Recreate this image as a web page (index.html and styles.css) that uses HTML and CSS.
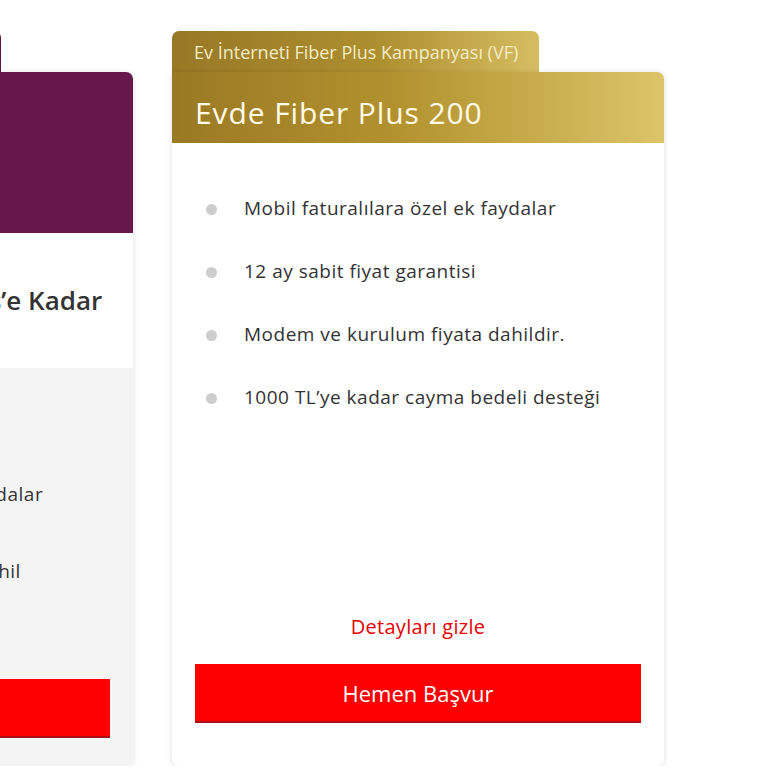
FILE: index.html
```html
<!DOCTYPE html>
<html lang="tr">
<head>
    <meta charset="UTF-8">
    <title>Ev İnterneti Kampanyaları</title>
    <link rel="stylesheet" href="styles.css">
</head>
<body>

<div class="offers">
    <!-- soldaki kart, ekrandan taşıyor -->
    <div class="offer">
        <div class="offer-tab offer-tab-purple"></div>
        <div class="offer-box">
            <div class="offer-head offer-head-purple"></div>
            <div class="offer-title">Fiber İnternette 100 Mbps’e Kadar</div>
            <div class="offer-body offer-body-grey">
                <ul class="features features-plain">
                    <li>Mobil faturalılara özel ek faydalar</li>
                    <li>Modem ve kurulum fiyata dahil</li>
                </ul>
                <a href="javascript:void(0);" class="apply">Hemen Başvur</a>
            </div>
        </div>
    </div>

    <div class="offer">
        <div class="offer-tab">Ev İnterneti Fiber Plus Kampanyası (VF)</div>
        <div class="offer-box">
            <div class="offer-head">
                <h2>Evde Fiber Plus 200</h2>
            </div>
            <div class="offer-body">
                <ul class="features">
                    <li>Mobil faturalılara özel ek faydalar</li>
                    <li>12 ay sabit fiyat garantisi</li>
                    <li>Modem ve kurulum fiyata dahildir.</li>
                    <li>1000 TL’ye kadar cayma bedeli desteği</li>
                </ul>
                <a href="javascript:void(0);" class="toggle">Detayları gizle</a>
                <a href="javascript:void(0);" class="apply">Hemen Başvur</a>
            </div>
        </div>
    </div>
</div>

</body>
</html>
```

FILE: styles.css
```css
body,h1,h2,h3,p,ul,li{margin:0;padding:0}
body{font:19px/1.4 "Open Sans", Lato, sans-serif;color:#333;background:#fff;overflow:hidden}
ul{list-style:none}
a{text-decoration:none}

.offers{
    display:flex;
    align-items:flex-start;
    gap:39px;
    margin-left:-359px;
    padding-top:31px;
}
.offer{
    width:492px;
    flex:none;
    display:flex;
    flex-direction:column;
}
.offer-tab{
    align-self:flex-start;
    height:41px;
    line-height:42px;
    padding:0 21px 0 22px;
    border-radius:7px 7px 0 0;
    background:linear-gradient(90deg,#987826 0%,#ad8e2f 55%,#d6bd62 100%);
    color:#f6edc4;
    font-size:18px;
    white-space:nowrap;
}
.offer-tab-purple{
    width:360px;
    padding:0;
    background:#5e1447;
}
.offer-box{
    height:694px;
    display:flex;
    flex-direction:column;
    background:#fff;
    border-radius:0 7px 7px 7px;
    box-shadow:0 1px 6px rgba(0,0,0,0.13);
    overflow:hidden;
}
.offer-head{
    height:71px;
    flex:none;
    display:flex;
    align-items:center;
    padding:11px 23px 0;
    box-sizing:border-box;
    background:linear-gradient(90deg,#9a7925 0%,#b2922f 45%,#dcc468 100%);
}
.offer-head h2{
    font-weight:400;
    font-size:30px;
    letter-spacing:0.9px;
    color:#fffbe6;
    white-space:nowrap;
}
.offer-head-purple{
    height:161px;
    background:#66174c;
}
.offer-title{
    height:135px;
    flex:none;
    display:flex;
    align-items:center;
    padding:0 0 0 35px;
    font-size:26px;
    font-weight:600;
    color:#333;
    white-space:nowrap;
}
.offer-body{
    flex:1;
    display:flex;
    flex-direction:column;
    padding:0 23px 43px;
}
.offer-body-grey{
    background:#f4f4f4;
    padding-bottom:28px;
}
.features{
    flex:1;
    padding:52px 0 0 49px;
    letter-spacing:0.5px;
}
.features li{
    position:relative;
    height:63px;
    white-space:nowrap;
}
.features li:before{
    content:"";
    position:absolute;
    left:-38px;
    top:9px;
    width:11px;
    height:11px;
    border-radius:50%;
    background:#cdcdcd;
}
.features-plain{
    padding:113px 0 0 67px;
}
.features-plain li{
    height:77px;
}
.features-plain li:before{
    display:none;
}
.toggle{
    text-align:center;
    color:#e60000;
    font-size:20px;
    letter-spacing:0.3px;
    margin-bottom:23px;
}
.apply{
    display:block;
    height:59px;
    line-height:58px;
    box-sizing:border-box;
    border-bottom:2px solid #a8101a;
    background:#f00;
    color:#fff;
    text-align:center;
    font-size:22px;
}
```
